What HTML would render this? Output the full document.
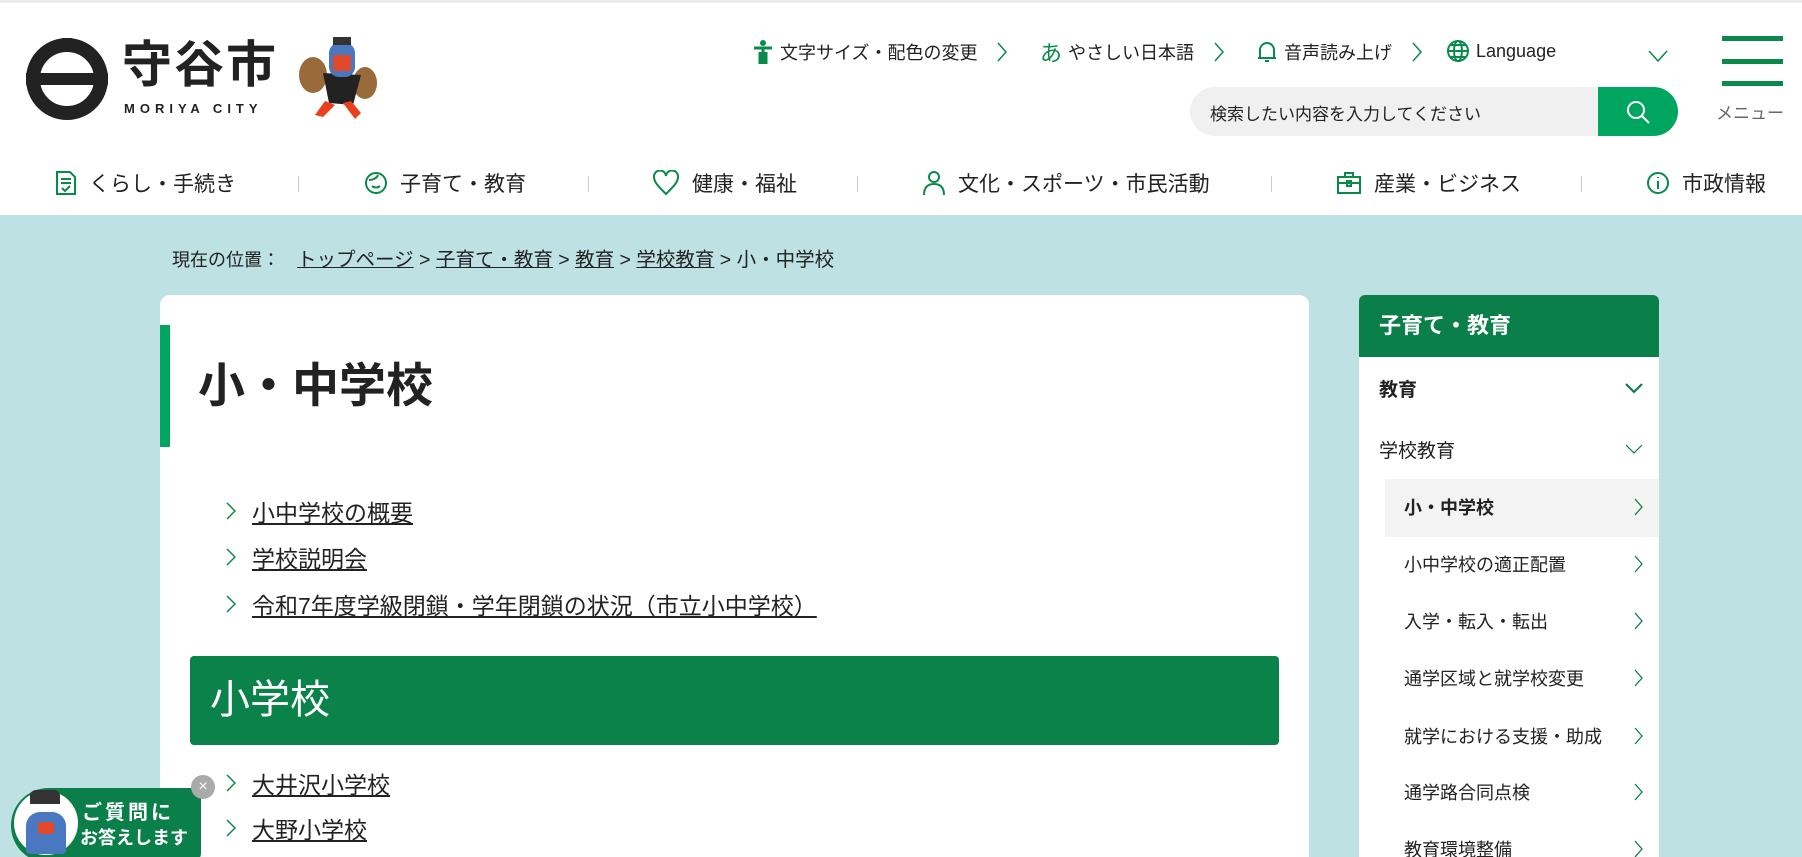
<!DOCTYPE html>
<html style="overflow:hidden;height:857px"><head><meta charset="utf-8"><style>
*{box-sizing:border-box;margin:0;padding:0}
body{width:1802px;height:857px;overflow:hidden;background:#bee1e4;font-family:"Liberation Sans","Noto Sans CJK JP",sans-serif;color:#222;position:relative}
.hdr{position:absolute;left:0;top:0;width:1802px;height:215px;background:#fff;border-top:3px solid #ececec}
.abs{position:absolute}
.tl{font-size:18px;color:#222;top:36px;display:flex;align-items:center;gap:6px;white-space:nowrap}
.chev{margin-left:14px}
.nav{top:165px;font-size:21px;display:flex;align-items:center;gap:12px;white-space:nowrap}
.sep{top:173px;width:1px;height:16px;background:#ccc}
.card{left:160px;top:295px;width:1149px;height:562px;background:#fff;border-radius:10px 10px 0 0}
.lk{font-size:23px;color:#222;display:flex;align-items:center;white-space:nowrap}
.lk u{text-decoration:underline}
.lk svg{margin-right:16px}
.side{left:1359px;top:295px;width:300px;height:562px;background:#fff;border-radius:6px 6px 0 0;overflow:hidden}
.si{position:absolute;font-size:19px;white-space:nowrap}
.sc{position:absolute;right:16px}
</style></head><body>
<div class="hdr">
 <svg class="abs" style="left:26px;top:35px" width="82" height="82" viewBox="0 0 82 82">
  <circle cx="41" cy="41" r="34" fill="none" stroke="#222" stroke-width="14"/>
  <rect x="0" y="35" width="82" height="12" fill="#222"/>
  <rect x="36" y="0" width="10" height="8" fill="#222"/><path d="M33 74 L41 82 L49 74 Z" fill="#222"/>
 </svg>
 <div class="abs" style="left:122px;top:34px;font-size:50px;font-weight:bold;letter-spacing:2px;line-height:56px">守谷市</div>
 <div class="abs" style="left:124px;top:98px;font-size:13px;font-weight:bold;letter-spacing:5px">MORIYA CITY</div>
 <svg class="abs" style="left:295px;top:32px" width="90" height="85" viewBox="0 0 90 85">
  <ellipse cx="18" cy="40" rx="14" ry="18" fill="#9a6b3a"/><ellipse cx="70" cy="48" rx="12" ry="16" fill="#9a6b3a"/>
  <path d="M28 38 L66 40 L58 70 L34 68Z" fill="#222"/><rect x="34" y="8" width="26" height="34" rx="10" fill="#4a78c0"/>
  <rect x="38" y="20" width="18" height="16" fill="#e04a2a"/><rect x="38" y="2" width="18" height="8" fill="#333"/>
  <path d="M30 66 L20 80 L28 82 L40 70Z M48 68 L60 84 L66 78 L56 66Z" fill="#e8401e"/>
 </svg>
 <div class="abs tl" style="left:752px"><svg width="22" height="26" viewBox="0 0 22 26"><circle cx="11" cy="4" r="3" fill="#0a8a4a"/><path d="M2 9h18M11 9v16M8 13v12M14 13v12" stroke="#0a8a4a" stroke-width="3"/></svg>文字サイズ・配色の変更<svg class="chev" width="10" height="20" viewBox="0 0 10 20"><path d="M1 1l8 9-8 9" fill="none" stroke="#0a8a4a" stroke-width="1.5"/></svg></div>
 <div class="abs tl" style="left:1040px;top:33px"><span style="color:#0a8a4a;font-size:22px">あ</span>やさしい日本語<svg class="chev" width="10" height="20" viewBox="0 0 10 20"><path d="M1 1l8 9-8 9" fill="none" stroke="#0a8a4a" stroke-width="1.5"/></svg></div>
 <div class="abs tl" style="left:1256px"><svg width="22" height="24" viewBox="0 0 22 24"><path d="M4 18 V10 a7 7 0 0 1 14 0 V18 H2 H20 M9 21 h4" fill="none" stroke="#0a8a4a" stroke-width="2"/></svg>音声読み上げ<svg class="chev" width="10" height="20" viewBox="0 0 10 20"><path d="M1 1l8 9-8 9" fill="none" stroke="#0a8a4a" stroke-width="1.5"/></svg></div>
 <div class="abs tl" style="left:1446px"><svg width="24" height="24" viewBox="0 0 24 24" fill="none" stroke="#0a8a4a" stroke-width="2"><circle cx="12" cy="12" r="10"/><ellipse cx="12" cy="12" rx="4" ry="10"/><path d="M2 12h20M4 6h16M4 18h16"/></svg>Language</div>
 <svg class="abs" style="left:1648px;top:47px" width="20" height="12" viewBox="0 0 20 12"><path d="M1 1l9 10 9-10" fill="none" stroke="#0a8a4a" stroke-width="1.5"/></svg>
 <div class="abs" style="left:1190px;top:84px;width:488px;height:49px;background:#f0f0f0;border-radius:25px;overflow:hidden">
  <div class="abs" style="left:20px;top:13px;font-size:17px">検索したい内容を入力してください</div>
  <div class="abs" style="left:408px;top:0;width:80px;height:49px;background:#00a660">
   <svg class="abs" style="left:27px;top:12px" width="26" height="26" viewBox="0 0 26 26" fill="none" stroke="#fff" stroke-width="2"><circle cx="11" cy="11" r="8"/><path d="M17 17l7 7"/></svg></div>
 </div>
 <div class="abs" style="left:1722px;top:33px;width:61px;height:5px;background:#0a8a4a"></div>
 <div class="abs" style="left:1722px;top:56px;width:61px;height:5px;background:#0a8a4a"></div>
 <div class="abs" style="left:1722px;top:78px;width:61px;height:5px;background:#0a8a4a"></div>
 <div class="abs" style="left:1716px;top:96px;font-size:17px;color:#666">メニュー</div>

 <div class="abs nav" style="left:55px"><svg width="22" height="26" viewBox="0 0 22 26" fill="none" stroke="#0a8a4a" stroke-width="2"><path d="M2 2h13l5 5v17H2z M6 9h10M6 13h10M7 18l3 3 5-5"/></svg>くらし・手続き</div>
 <div class="abs sep" style="left:298px"></div>
 <div class="abs nav" style="left:364px"><svg width="24" height="24" viewBox="0 0 24 24" fill="none" stroke="#0a8a4a" stroke-width="2"><circle cx="12" cy="12" r="10"/><path d="M5 9c4 0 8-2 9-5M8 15c2 2 6 2 8 0"/></svg>子育て・教育</div>
 <div class="abs sep" style="left:588px"></div>
 <div class="abs nav" style="left:652px"><svg width="28" height="26" viewBox="0 0 28 26" fill="none" stroke="#0a8a4a" stroke-width="2"><path d="M14 24C6 16 2 12 2 7a6 6 0 0 1 12-1 6 6 0 0 1 12 1c0 5-4 9-12 17z"/></svg>健康・福祉</div>
 <div class="abs sep" style="left:857px"></div>
 <div class="abs nav" style="left:922px"><svg width="24" height="26" viewBox="0 0 24 26" fill="none" stroke="#0a8a4a" stroke-width="2"><circle cx="12" cy="7" r="5"/><path d="M2 25c0-8 4-11 10-11s10 3 10 11"/></svg>文化・スポーツ・市民活動</div>
 <div class="abs sep" style="left:1271px"></div>
 <div class="abs nav" style="left:1336px"><svg width="26" height="24" viewBox="0 0 26 24" fill="none" stroke="#0a8a4a" stroke-width="2"><rect x="2" y="6" width="22" height="16"/><path d="M9 6V2h8v4M2 12h22M11 10h4v5h-4z"/></svg>産業・ビジネス</div>
 <div class="abs sep" style="left:1581px"></div>
 <div class="abs nav" style="left:1646px"><svg width="24" height="24" viewBox="0 0 24 24" fill="none" stroke="#0a8a4a" stroke-width="2"><circle cx="12" cy="12" r="10"/><path d="M12 10v8M12 6v1"/></svg>市政情報</div>
</div>

<div class="abs" style="left:172px;top:243px;font-size:18px;white-space:nowrap">現在の位置： <span style="font-size:19.5px;margin-left:12px"><u>トップページ</u> &gt; <u>子育て・教育</u> &gt; <u>教育</u> &gt; <u>学校教育</u> &gt; 小・中学校</span></div>

<div class="abs card">
 <div class="abs" style="left:0;top:30px;width:10px;height:122px;background:#00a660"></div>
 <div class="abs" style="left:38px;top:61px;font-size:47px;font-weight:bold;line-height:60px">小・中学校</div>
 <div class="abs lk" style="left:66px;top:199px"><svg width="10" height="20" viewBox="0 0 10 20"><path d="M1 2l8 8-8 8" fill="none" stroke="#0a8a4a" stroke-width="1.5"/></svg><u>小中学校の概要</u></div>
 <div class="abs lk" style="left:66px;top:245px"><svg width="10" height="20" viewBox="0 0 10 20"><path d="M1 2l8 8-8 8" fill="none" stroke="#0a8a4a" stroke-width="1.5"/></svg><u>学校説明会</u></div>
 <div class="abs lk" style="left:66px;top:292px"><svg width="10" height="20" viewBox="0 0 10 20"><path d="M1 2l8 8-8 8" fill="none" stroke="#0a8a4a" stroke-width="1.5"/></svg><u>令和7年度学級閉鎖・学年閉鎖の状況（市立小中学校）</u></div>
 <div class="abs" style="left:30px;top:361px;width:1089px;height:89px;background:#0b824a;border-radius:4px;color:#fff;font-size:40px;line-height:89px;padding-left:20px">小学校</div>
 <div class="abs lk" style="left:66px;top:471px"><svg width="10" height="20" viewBox="0 0 10 20"><path d="M1 2l8 8-8 8" fill="none" stroke="#0a8a4a" stroke-width="1.5"/></svg><u>大井沢小学校</u></div>
 <div class="abs lk" style="left:66px;top:516px"><svg width="10" height="20" viewBox="0 0 10 20"><path d="M1 2l8 8-8 8" fill="none" stroke="#0a8a4a" stroke-width="1.5"/></svg><u>大野小学校</u></div>
</div>

<div class="abs side">
 <div class="abs" style="left:0;top:0;width:300px;height:62px;background:#0b7f4a;color:#fff;font-size:22px;font-weight:bold;line-height:62px;padding-left:20px">子育て・教育</div>
 <div class="si" style="left:20px;top:80px;font-weight:bold">教育</div><svg class="sc" style="top:88px" width="18" height="11" viewBox="0 0 18 11"><path d="M1 1l8 8 8-8" fill="none" stroke="#0b7f4a" stroke-width="2.2"/></svg>
 <div class="si" style="left:20px;top:141px">学校教育</div><svg class="sc" style="top:149px" width="18" height="11" viewBox="0 0 18 11"><path d="M1 1l8 8 8-8" fill="none" stroke="#0b7f4a" stroke-width="1.2"/></svg>
 <div class="abs" style="left:26px;top:184px;width:274px;height:58px;background:#f3f3f3"></div>
 <div class="si" style="left:45px;top:199px;font-weight:bold;font-size:18px">小・中学校</div>
 <div class="si" style="left:45px;top:256px;font-size:18px">小中学校の適正配置</div>
 <div class="si" style="left:45px;top:313px;font-size:18px">入学・転入・転出</div>
 <div class="si" style="left:45px;top:370px;font-size:18px">通学区域と就学校変更</div>
 <div class="si" style="left:45px;top:428px;font-size:18px">就学における支援・助成</div>
 <div class="si" style="left:45px;top:484px;font-size:18px">通学路合同点検</div>
 <div class="si" style="left:45px;top:541px;font-size:18px">教育環境整備</div>
 <svg class="sc" style="top:203px" width="9" height="18" viewBox="0 0 9 18"><path d="M1 1l7 8-7 8" fill="none" stroke="#0b7f4a" stroke-width="1.3"/></svg>
 <svg class="sc" style="top:260px" width="9" height="18" viewBox="0 0 9 18"><path d="M1 1l7 8-7 8" fill="none" stroke="#0b7f4a" stroke-width="1.3"/></svg>
 <svg class="sc" style="top:317px" width="9" height="18" viewBox="0 0 9 18"><path d="M1 1l7 8-7 8" fill="none" stroke="#0b7f4a" stroke-width="1.3"/></svg>
 <svg class="sc" style="top:374px" width="9" height="18" viewBox="0 0 9 18"><path d="M1 1l7 8-7 8" fill="none" stroke="#0b7f4a" stroke-width="1.3"/></svg>
 <svg class="sc" style="top:432px" width="9" height="18" viewBox="0 0 9 18"><path d="M1 1l7 8-7 8" fill="none" stroke="#0b7f4a" stroke-width="1.3"/></svg>
 <svg class="sc" style="top:488px" width="9" height="18" viewBox="0 0 9 18"><path d="M1 1l7 8-7 8" fill="none" stroke="#0b7f4a" stroke-width="1.3"/></svg>
 <svg class="sc" style="top:545px" width="9" height="18" viewBox="0 0 9 18"><path d="M1 1l7 8-7 8" fill="none" stroke="#0b7f4a" stroke-width="1.3"/></svg>
</div>

<div class="abs" style="left:11px;top:788px;width:190px;height:75px;background:#0b7f4a;border-radius:38px 10px 10px 38px"></div>
<div class="abs" style="left:14px;top:791px;width:64px;height:64px;background:#fff;border-radius:50%"></div>
<div class="abs" style="left:26px;top:812px;width:40px;height:42px;background:#4a78c0;border-radius:14px 14px 4px 4px"></div>
<div class="abs" style="left:38px;top:822px;width:16px;height:12px;background:#e04a2a;border-radius:3px"></div>
<div class="abs" style="left:30px;top:790px;width:30px;height:14px;background:#333;border-radius:6px 6px 0 0"></div>
<div class="abs" style="left:82px;top:796px;color:#fff;font-size:20px;font-weight:bold;letter-spacing:3px">ご質問に</div>
<div class="abs" style="left:80px;top:824px;color:#fff;font-size:18px;font-weight:bold">お答えします</div>
<div class="abs" style="left:191px;top:775px;width:24px;height:24px;background:#aaa;border-radius:50%;color:#fff;font-size:16px;line-height:24px;text-align:center">×</div>
</body></html>
